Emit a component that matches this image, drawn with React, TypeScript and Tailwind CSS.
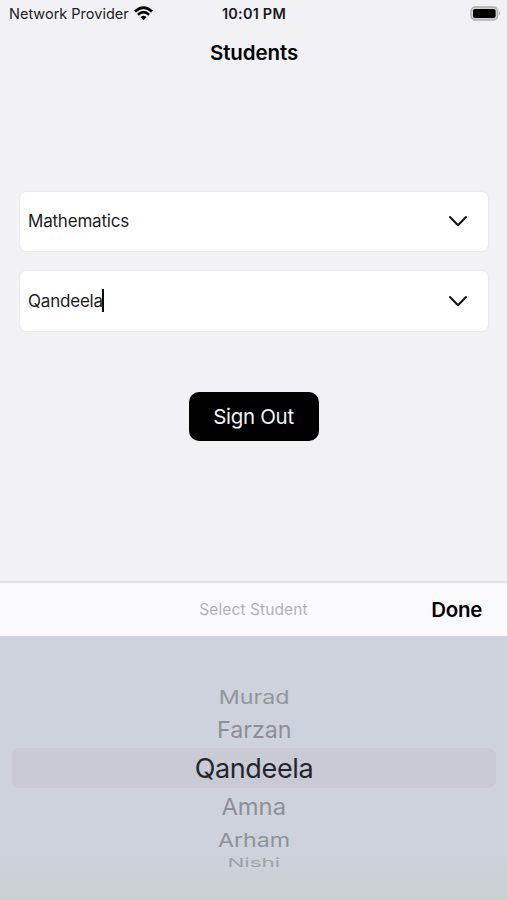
import React from "react";

const students = [
  { name: "Murad", row: "h-[30px]", look: "translate-y-px scale-x-[0.86] scale-y-[0.7] text-[#93969d]" },
  { name: "Farzan", row: "h-[37px]", look: "scale-x-[0.86] scale-y-[0.87] text-[#8c8f95]" },
  { name: "Qandeela", row: "h-[40px]", look: "tracking-[-0.35px] text-[#25262b]" },
  { name: "Amna", row: "h-[37px]", look: "scale-x-[0.88] scale-y-[0.87] text-[#8c8f95]" },
  { name: "Arham", row: "h-[29px]", look: "translate-y-px scale-x-[0.86] scale-y-[0.7] text-[#8f9297]" },
  { name: "Nishi", row: "h-[19px]", look: "-translate-y-px scale-x-[0.83] scale-y-[0.44] text-[#a0a3a9]" },
];

function Wifi() {
  return (
    <svg className="ml-[5px] h-[15px] w-[19px]" viewBox="0 0 18 14" fill="none" stroke="#050505" strokeWidth="2.5">
      <path d="M0.9 5.1 Q9 -2.4 17.1 5.1" />
      <path d="M3.7 8.1 Q9 3.3 14.3 8.1" />
      <path d="M6.1 10.2 Q9 7.9 11.9 10.2 L9 13.4 Z" fill="#050505" stroke="none" />
    </svg>
  );
}

function Battery() {
  return (
    <svg className="h-[15px] w-[31px]" viewBox="0 0 31 15">
      <rect x="1" y="1" width="26.6" height="13" rx="4" fill="#d0d0d3" stroke="#b0b0b3" strokeWidth="1.3" />
      <rect x="3" y="3" width="22.6" height="9" rx="2" fill="#000" />
      <path d="M29 5.3 Q31 7.5 29 9.7 Z" fill="#a2a2a5" />
    </svg>
  );
}

function Field({ value, focused = false }: { value: string; focused?: boolean }) {
  return (
    <div className="flex h-[59.5px] items-center justify-between rounded-[6px] bg-white pl-[8px] pr-[20px] shadow-[0_0_2px_rgba(0,0,0,0.1)]">
      <div className="flex items-center text-[17px] tracking-[-0.2px] text-[#1b1b1d]">
        <span className="pt-px">{value}</span>
        {focused && <span className="-ml-px h-[23px] w-[2.5px] bg-black" />}
      </div>
      <svg className="h-[12px] w-[20px]" viewBox="0 0 20 12" fill="none" stroke="#111" strokeWidth="2" strokeLinecap="round" strokeLinejoin="round">
        <path d="M2 2 L10 10.3 L18 2" />
      </svg>
    </div>
  );
}

export default function App() {
  return (
    <div className="flex h-[900px] w-[507px] flex-col overflow-hidden bg-[#f1f1f6] font-['Inter',sans-serif] text-black">
      <header className="grid h-[27px] grid-cols-3 items-center pl-[9px] pr-[6px] text-[14.5px]">
        <div className="flex items-center whitespace-nowrap text-[#222224]">
          <span>Network Provider</span>
          <Wifi />
        </div>
        <div className="pr-[2px] text-center font-semibold tracking-[0.2px] text-[#1b1b1d]">10:01 PM</div>
        <div className="flex justify-end"><Battery /></div>
      </header>
      <h1 className="flex h-[50px] items-center justify-center pl-px pt-[2px] text-[20.5px] font-semibold tracking-[-0.1px]">Students</h1>

      <main className="flex flex-1 flex-col items-center pl-[20px] pr-[19px] pt-[114.5px]">
        <div className="flex w-full flex-col gap-[20px]">
          <Field value="Mathematics" />
          <Field value="Qandeela" focused />
        </div>
        <button className="mr-px mt-[61.5px] h-[49px] w-[130px] rounded-[10px] bg-black pt-[2px] text-[20.5px] tracking-[-0.3px] text-[#f4f4f4]">Sign Out</button>
      </main>

      <div className="grid h-[55px] shrink-0 grid-cols-3 items-center border-t-2 border-[#e3e3e6] bg-[#fafafd] px-[25px]">
        <span />
        <span className="text-center text-[15.5px] tracking-[0.1px] text-[#b3b3b6]">Select Student</span>
        <button className="pt-[2px] text-right text-[20.5px] font-semibold tracking-[-0.3px]">Done</button>
      </div>
      <div className="flex h-[264px] shrink-0 flex-col bg-linear-to-b from-[#ced2dc] from-80% to-[#cbd0d2] pl-[12px] pr-[11px] pt-[45px]">
        {students.map(({ name, row, look }) => (
          <div key={name} className={`flex shrink-0 items-center justify-center rounded-[8px] ${row} ${name === "Qandeela" ? "bg-[#c9cad4]" : ""}`}>
            <span className={`text-[27px] leading-none ${look}`}>{name}</span>
          </div>
        ))}
      </div>
    </div>
  );
}
